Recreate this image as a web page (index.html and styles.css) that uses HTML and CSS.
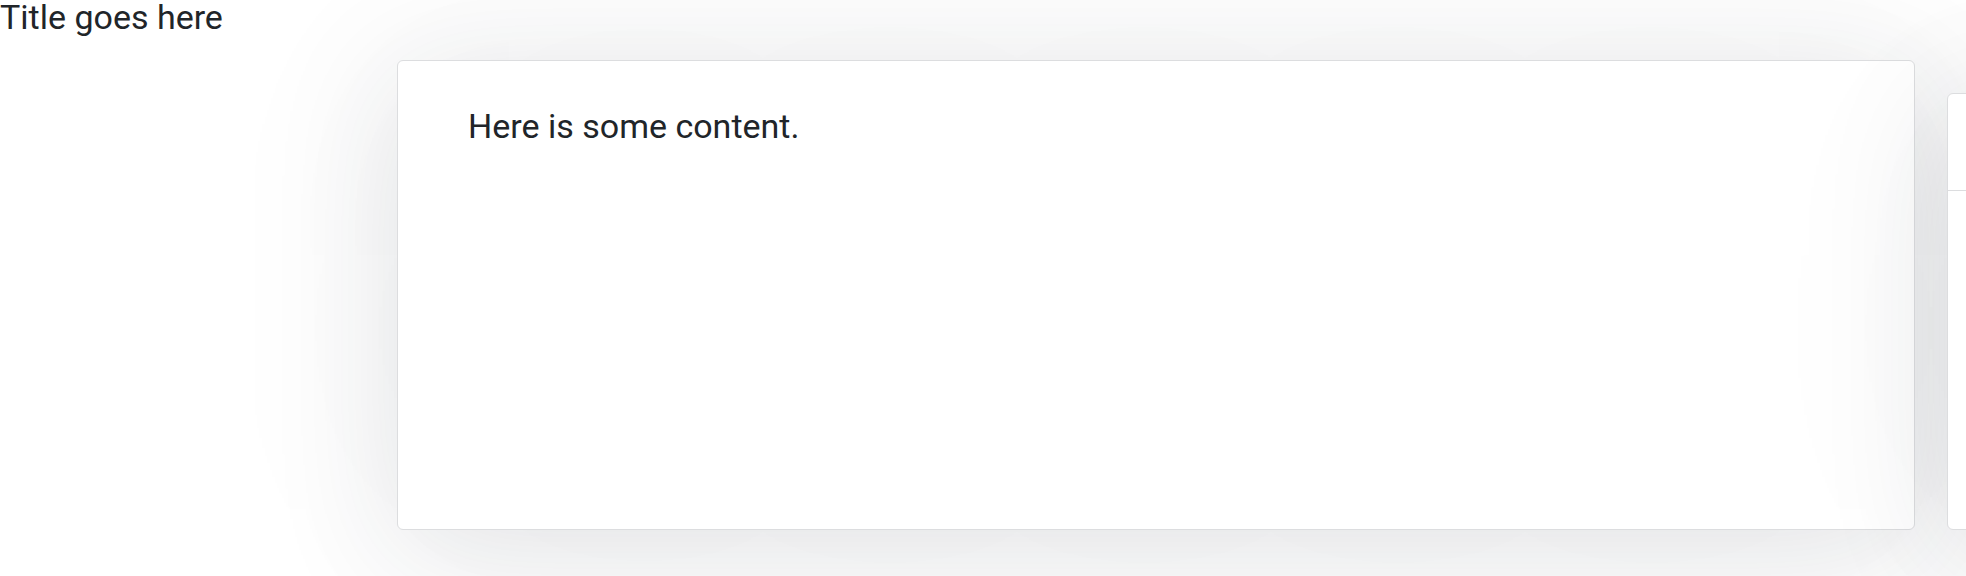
FILE: index.html
```html
<!DOCTYPE html>
<html>
<head>
<meta charset="utf-8">
<link rel="stylesheet" href="styles.css">
</head>
<body>
<h1 class="title">Title goes here</h1>
<div class="row">
  <div class="card card-main">
    <p class="content">Here is some content.</p>
  </div>
  <div class="card card-side">
    <div class="card-head"></div>
    <div class="card-body"></div>
  </div>
</div>
</body>
</html>
```
FILE: styles.css
```css
html, body {
  margin: 0;
  padding: 0;
  background: #ffffff;
  overflow: hidden;
}
body {
  width: 1966px;
  height: 576px;
  font-family: Roboto, "Liberation Sans", sans-serif;
  color: #212529;
}
.title {
  margin: 0;
  font-size: 34px;
  font-weight: 400;
  line-height: 34px;
}
.row {
  display: flex;
  align-items: flex-end;
  gap: 32px;
  padding-left: 397px;
  margin-top: 26px;
}
.card {
  flex: none;
  background: #fff;
  border: 1px solid #dcdddf;
  border-radius: 6px;
  box-shadow: 0 20px 130px rgba(30, 40, 60, 0.12), 0 0 400px rgba(30, 40, 60, 0.04);
  box-sizing: border-box;
}
.card-main {
  width: 1518px;
  height: 470px;
  padding: 40px 70px;
}
.content {
  margin: 0;
  font-size: 34px;
  line-height: 50px;
}
.card-side {
  width: 500px;
  height: 437px;
  display: flex;
  flex-direction: column;
}
.card-head {
  height: 96px;
  border-bottom: 1px solid #dcdddf;
}
.card-body {
  flex: 1;
}
```
